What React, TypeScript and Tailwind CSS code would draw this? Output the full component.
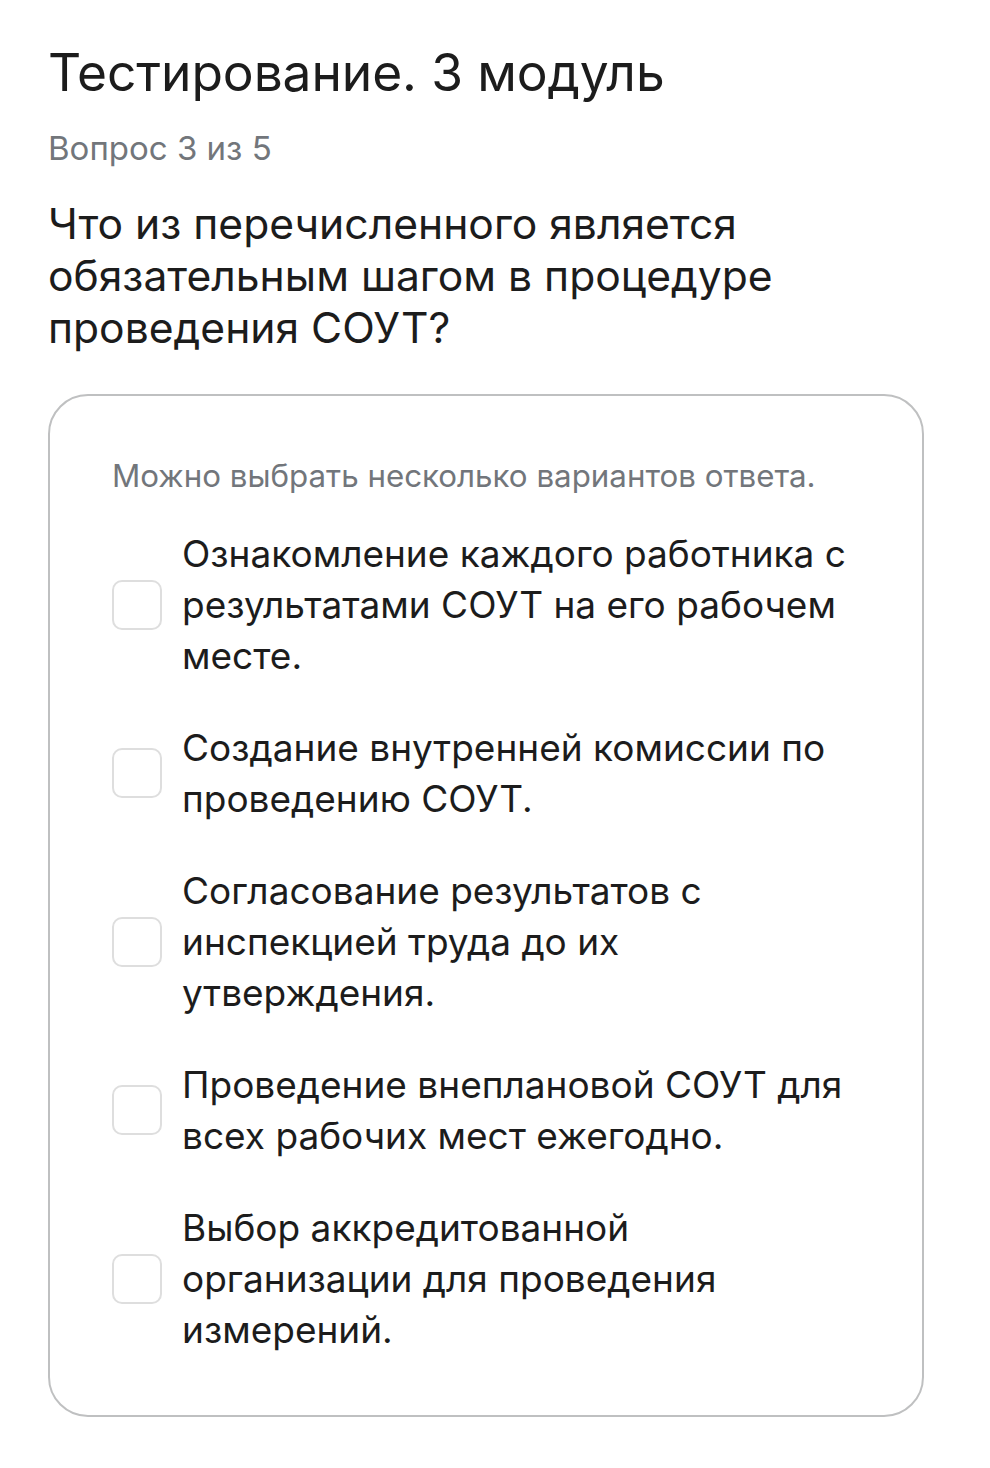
const OPTIONS = [
  'Ознакомление каждого работника с результатами СОУТ на его рабочем месте.',
  'Создание внутренней комиссии по проведению СОУТ.',
  'Согласование результатов с инспекцией труда до их утверждения.',
  'Проведение внеплановой СОУТ для всех рабочих мест ежегодно.',
  'Выбор аккредитованной организации для проведения измерений.',
];

export default function App() {
  return (
    <div
      className="min-h-[1468px] w-[990px] bg-white px-12 pt-[40px] text-[#1c1c1c]"
      style={{ fontFamily: 'Inter, "Noto Sans", sans-serif' }}
    >
      <h1 className="text-[51.5px] font-normal leading-[64px] tracking-[-0.1px]">
        Тестирование. 3 модуль
      </h1>
      <p className="mt-[24px] text-[33px] leading-[40px] text-[#72767b]">Вопрос 3 из 5</p>
      <h2 className="mt-[30px] text-[42.6px] font-normal leading-[52px]">
        Что из перечисленного является обязательным шагом в процедуре проведения СОУТ?
      </h2>

      <div className="mt-[40px] w-[876px] rounded-[40px] border-2 border-[#bfc0c1] pb-[60px] pl-[62px] pr-[64px] pt-[60px]">
        <p className="text-[31.3px] leading-[40px] text-[#72767b]">
          Можно выбрать несколько вариантов ответа.
        </p>
        <div className="mt-[32px] flex flex-col gap-[41px]">
          {OPTIONS.map((text) => (
            <label key={text} className="flex items-center gap-[20px]">
              <span className="h-[50px] w-[50px] shrink-0 rounded-[10px] border-2 border-[#dedede]" />
              <span className="text-[37px] leading-[51px] text-[#1c1c1c]">{text}</span>
            </label>
          ))}
        </div>
      </div>
    </div>
  );
}
